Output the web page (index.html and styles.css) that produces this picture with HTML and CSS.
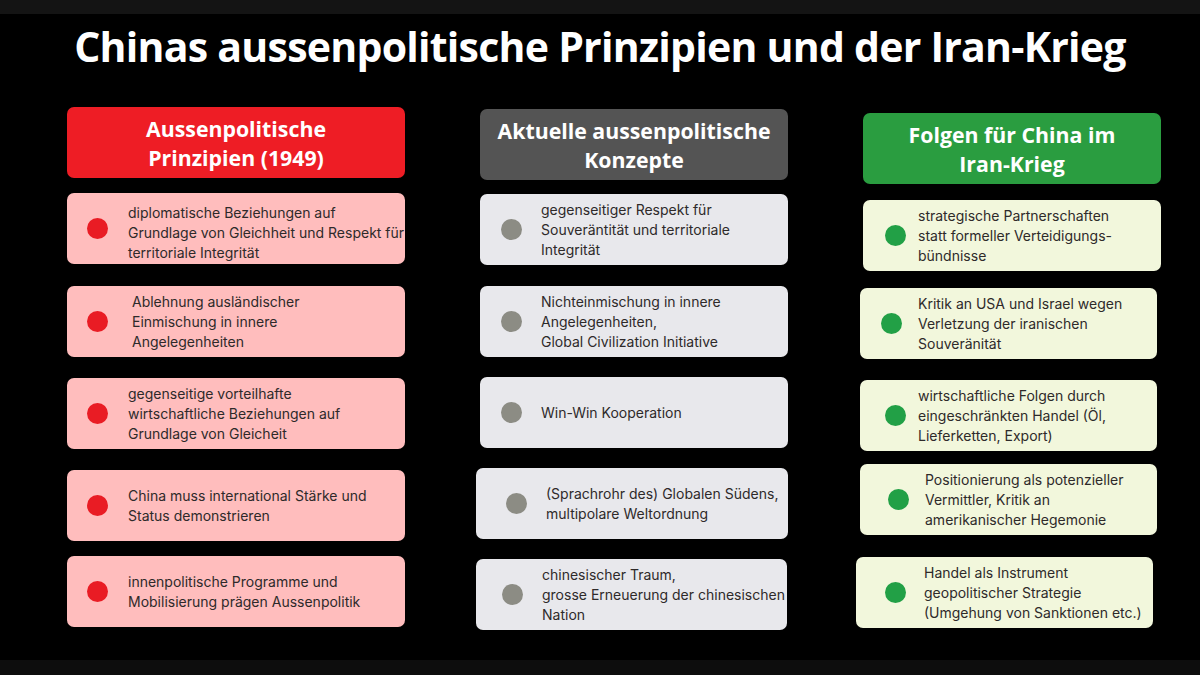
FILE: index.html
```html
<!DOCTYPE html>
<html lang="de">
<head>
<meta charset="utf-8">
<title>Chinas aussenpolitische Prinzipien und der Iran-Krieg</title>
<link rel="stylesheet" href="styles.css">
</head>
<body>
<div class="page">
  <div class="band band-top"></div>
  <main class="main">
    <h1 class="title">Chinas aussenpolitische Prinzipien und der Iran-Krieg</h1>
    <div class="columns">
      <section class="col col-red">
        <h2 class="head">Aussenpolitische<br>Prinzipien (1949)</h2>
        <div class="card"><span class="dot"></span><p class="low">diplomatische Beziehungen auf Grundlage von Gleichheit und Respekt für territoriale Integrität</p></div>
        <div class="card"><span class="dot"></span><p class="shift">Ablehnung ausländischer<br>Einmischung in innere<br>Angelegenheiten</p></div>
        <div class="card"><span class="dot"></span><p>gegenseitige vorteilhafte<br>wirtschaftliche Beziehungen auf<br>Grundlage von Gleicheit</p></div>
        <div class="card"><span class="dot"></span><p>China muss international Stärke und<br>Status demonstrieren</p></div>
        <div class="card"><span class="dot"></span><p>innenpolitische Programme und<br>Mobilisierung prägen Aussenpolitik</p></div>
      </section>
      <section class="col col-gray">
        <h2 class="head">Aktuelle aussenpolitische<br>Konzepte</h2>
        <div class="card"><span class="dot"></span><p>gegenseitiger Respekt für<br>Souveräntität und territoriale<br>Integrität</p></div>
        <div class="card"><span class="dot"></span><p>Nichteinmischung in innere<br>Angelegenheiten,<br>Global Civilization Initiative</p></div>
        <div class="card"><span class="dot"></span><p>Win-Win Kooperation</p></div>
        <div class="card"><span class="dot"></span><p>(Sprachrohr des) Globalen Südens,<br>multipolare Weltordnung</p></div>
        <div class="card"><span class="dot"></span><p>chinesischer Traum,<br>grosse Erneuerung der chinesischen<br>Nation</p></div>
      </section>
      <section class="col col-green">
        <h2 class="head">Folgen für China im<br>Iran-Krieg</h2>
        <div class="card"><span class="dot"></span><p>strategische Partnerschaften<br>statt formeller Verteidigungs-<br>bündnisse</p></div>
        <div class="card"><span class="dot"></span><p>Kritik an USA und Israel wegen<br>Verletzung der iranischen<br>Souveränität</p></div>
        <div class="card"><span class="dot"></span><p>wirtschaftliche Folgen durch<br>eingeschränkten Handel (Öl,<br>Lieferketten, Export)</p></div>
        <div class="card"><span class="dot"></span><p>Positionierung als potenzieller<br>Vermittler, Kritik an<br>amerikanischer Hegemonie</p></div>
        <div class="card"><span class="dot"></span><p>Handel als Instrument<br>geopolitischer Strategie<br>(Umgehung von Sanktionen etc.)</p></div>
      </section>
    </div>
  </main>
  <div class="band band-bottom"></div>
</div>
</body>
</html>
```
FILE: styles.css
```css
* { box-sizing: border-box; }
html, body { margin: 0; padding: 0; background: #000; }
body { width: 1200px; height: 675px; overflow: hidden; font-family: Inter, "Noto Sans", sans-serif; }

.page { display: flex; flex-direction: column; height: 675px; }
.band { flex: none; }
.band-top { height: 14px; background: #141414; }
.band-bottom { height: 15px; background: #0d0d0d; }
.main { flex: 1; display: flex; flex-direction: column; }

.title {
  margin: 5px 0 0;
  height: 54px;
  font-family: "Open Sans", sans-serif;
  font-weight: 700;
  font-size: 41px;
  line-height: 54px;
  color: #fff;
  text-align: center;
  letter-spacing: -0.75px;
}

.columns { display: flex; gap: 75px; padding-left: 67px; margin-top: 34px; }
.col { display: flex; flex-direction: column; }
.col-red { width: 338px; }
.col-gray { width: 308px; margin-top: 2px; }
.col-green { width: 298px; margin-top: 6px; }

.head {
  margin: 0;
  height: 71px;
  border-radius: 7px;
  display: flex; align-items: center; justify-content: center;
  text-align: center;
  font-family: "Open Sans", sans-serif;
  font-weight: 700;
  font-size: 21.3px;
  line-height: 29px;
  color: #fff;
}

.card {
  height: 71px;
  border-radius: 7px;
  display: flex; align-items: center;
  padding-left: 20px;
}
.card p {
  margin: 0;
  font-size: 14px;
  line-height: 20px;
  color: #2e2a2a;
}
.dot { flex: none; width: 21px; height: 21px; border-radius: 50%; margin-right: 20px; }

/* red column */
.col-red .head { background: #ee1d25; }
.col-red .card { background: #ffbdbd; }
.col-red .dot { background: #e91c24; }
.col-red .card:nth-of-type(1) { margin-top: 15px; }
.col-red .card:nth-of-type(2) { margin-top: 22px; }
.col-red .card:nth-of-type(3) { margin-top: 21px; }
.col-red .card:nth-of-type(4) { margin-top: 21px; }
.col-red .card:nth-of-type(5) { margin-top: 15px; }
.col-red .shift { margin-left: 4px; }
.col-red .low { padding-top: 8px; }

/* gray column */
.col-gray .head { background: #545454; }
.col-gray .card { background: #e8e8ec; padding-left: 21px; }
.col-gray .dot { background: #8c8c84; margin-right: 19px; }
.col-gray .card:nth-of-type(1) { margin-top: 14px; }
.col-gray .card:nth-of-type(2) { margin-top: 21px; }
.col-gray .card:nth-of-type(3) { margin-top: 20px; }
.col-gray .card:nth-of-type(4) { margin-top: 20px; margin-left: -4px; padding-left: 30px; }
.col-gray .card:nth-of-type(5) { margin-top: 20px; margin-left: -4px; width: 311px; padding-left: 26px; }

/* green column */
.col-green .head { background: #2a9d40; }
.col-green .card { background: #f2f7dc; padding-left: 22px; }
.col-green .dot { background: #22a046; margin-right: 12px; }
.col-green .card:nth-of-type(1) { margin-top: 16px; }
.col-green .card:nth-of-type(2) { margin-top: 17px; margin-left: -3px; width: 297px; padding-left: 21px; }
.col-green .card:nth-of-type(2) .dot { margin-right: 16px; }
.col-green .card:nth-of-type(3) { margin-top: 21px; margin-left: -3px; width: 297px; padding-left: 25px; }
.col-green .card:nth-of-type(4) { margin-top: 13px; margin-left: -3px; width: 297px; padding-left: 28px; }
.col-green .card:nth-of-type(4) .dot { margin-right: 16px; }
.col-green .card:nth-of-type(5) { margin-top: 22px; margin-left: -7px; width: 297px; padding-left: 29px; }
.col-green .card:nth-of-type(5) .dot { margin-right: 18px; }
```
